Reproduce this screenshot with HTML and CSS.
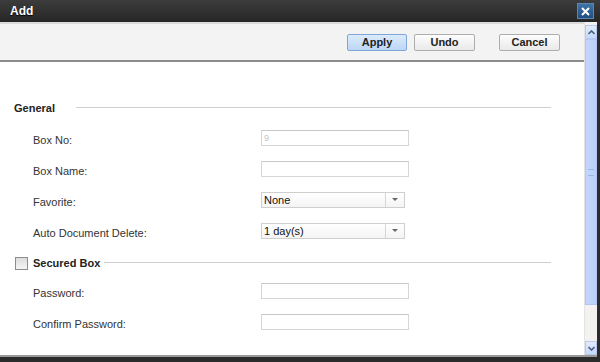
FILE: index.html
```html
<!DOCTYPE html>
<html lang="en">
<head>
    <meta charset="UTF-8">
    <title>Add</title>
    <link rel="stylesheet" href="styles.css">
</head>
<body>
    <div class="window">
        <div class="titlebar">
            <span class="title">Add</span>
            <button class="close-btn">
                <svg width="9" height="9" viewBox="0 0 9 9"><path d="M1 1L8 8M8 1L1 8" stroke="#fff" stroke-width="2"/></svg>
            </button>
        </div>

        <div class="frame">
            <div class="content">
                <!-- Toolbar -->
                <div class="toolbar">
                    <button class="btn btn-primary">Apply</button>
                    <button class="btn">Undo</button>
                    <button class="btn btn-cancel">Cancel</button>
                </div>

                <div class="form">
                    <div class="section-head">
                        <span class="section-title">General</span>
                        <span class="section-line"></span>
                    </div>
                    <div class="rows">
                        <div class="row">
                            <label>Box No:</label>
                            <input class="field" type="text" placeholder="9">
                        </div>
                        <div class="row">
                            <label>Box Name:</label>
                            <input class="field" type="text">
                        </div>
                        <div class="row">
                            <label>Favorite:</label>
                            <div class="select"><span>None</span><span class="arrow"></span></div>
                        </div>
                        <div class="row">
                            <label>Auto Document Delete:</label>
                            <div class="select"><span>1 day(s)</span><span class="arrow"></span></div>
                        </div>
                    </div>

                    <div class="section-head secured">
                        <span class="checkbox"></span>
                        <span class="section-title">Secured Box</span>
                        <span class="section-line"></span>
                    </div>
                    <div class="rows rows-secured">
                        <div class="row">
                            <label>Password:</label>
                            <input class="field" type="password">
                        </div>
                        <div class="row">
                            <label>Confirm Password:</label>
                            <input class="field" type="password">
                        </div>
                    </div>
                </div>
            </div>

            <!-- Scrollbar -->
            <div class="scrollbar">
                <div class="scroll-btn">
                    <svg width="7" height="5" viewBox="0 0 7 5"><path d="M0.5 4L3.5 1L6.5 4" fill="none" stroke="#4d6185" stroke-width="1.6"/></svg>
                </div>
                <div class="scroll-thumb"><span class="grip"></span></div>
                <div class="scroll-track"></div>
                <div class="scroll-btn">
                    <svg width="7" height="5" viewBox="0 0 7 5"><path d="M0.5 1L3.5 4L6.5 1" fill="none" stroke="#4d6185" stroke-width="1.6"/></svg>
                </div>
            </div>
        </div>
    </div>
</body>
</html>
```

FILE: styles.css
```css
/* Dialog window */
body {
    margin: 0;
    padding: 0;
    font-family: "Liberation Sans", Arial, sans-serif;
    font-size: 11px;
    color: #333;
    background-color: #2b2b2b;
}

.window {
    width: 600px;
    height: 362px;
    display: flex;
    flex-direction: column;
    background-color: #2b2b2b;
    box-sizing: border-box;
    padding: 0 3px 5px 0;
}

.titlebar {
    height: 22px;
    flex: 0 0 22px;
    display: flex;
    align-items: center;
    justify-content: space-between;
    background: linear-gradient(#3c3c3c, #262626);
    margin-right: -3px;
    padding: 0 6px 0 10px;
}

.title {
    color: #fff;
    font-weight: bold;
    font-size: 12px;
    text-shadow: 0 1px 1px #000;
}

.close-btn {
    width: 17px;
    height: 16px;
    padding: 0;
    display: flex;
    align-items: center;
    justify-content: center;
    border: 1px solid #5d86b0;
    background: linear-gradient(#3f74a8, #1f4f80);
}

.frame {
    flex: 1;
    display: flex;
    background-color: #fff;
    border-bottom: 2px solid #999;
}

.content {
    flex: 1;
    display: flex;
    flex-direction: column;
}

/* Toolbar */
.toolbar {
    height: 36px;
    display: flex;
    align-items: center;
    justify-content: flex-end;
    background-color: #f3f3f3;
    border-top: 2px solid #dadada;
    border-bottom: 2px solid #8c8c8c;
    padding-right: 24px;
}

.btn {
    width: 61px;
    height: 17px;
    margin-left: 7px;
    padding: 0;
    font-family: "Liberation Sans", Arial, sans-serif;
    font-size: 11px;
    font-weight: bold;
    color: #222;
    background: linear-gradient(#fdfdfd, #e9e9e9);
    border: 1px solid #adadad;
    border-radius: 2px;
}

.btn-primary {
    width: 60px;
    background: linear-gradient(#dcebfc, #bcd6f5);
    border-color: #7ea6d6;
}

.btn-cancel {
    margin-left: 24px;
}

/* Form */
.form {
    padding: 39px 33px 0 14px;
}

.section-head {
    height: 14px;
    display: flex;
    align-items: center;
}

.section-title {
    font-weight: bold;
    color: #222;
}

.section-line {
    flex: 1;
    height: 1px;
    margin-left: 21px;
    margin-top: -2px;
    background-color: #cfcfcf;
}

.secured {
    margin-top: 17px;
    padding-left: 1px;
}

.secured .section-line {
    margin-left: 4px;
}

.checkbox {
    width: 11px;
    height: 11px;
    margin-right: 5px;
    border: 1px solid #8d8d8d;
    background: linear-gradient(#dcdcdc, #f6f6f6);
}

.rows {
    margin-top: 15px;
    display: flex;
    flex-direction: column;
    gap: 15px;
    padding-left: 19px;
}

.rows-secured {
    margin-top: 13px;
}

.row {
    height: 16px;
    display: flex;
    align-items: center;
}

.row label {
    width: 228px;
    padding-top: 4px;
    color: #333;
}

.field {
    width: 148px;
    height: 16px;
    box-sizing: border-box;
    margin: 0;
    padding: 0 2px;
    border: 1px solid #d6d6d6;
    border-top-color: #c8c8c8;
    font-family: "Liberation Sans", Arial, sans-serif;
    font-size: 9px;
}

.field::placeholder {
    color: #c4c4c4;
}

.select {
    width: 144px;
    height: 16px;
    box-sizing: border-box;
    display: flex;
    align-items: center;
    justify-content: space-between;
    border: 1px solid #cfcfcf;
    background: linear-gradient(#fff, #f4f4f4);
    padding-left: 2px;
    color: #111;
}

.arrow {
    width: 18px;
    height: 14px;
    border-left: 1px solid #d6d6d6;
    position: relative;
}

.arrow::after {
    content: "";
    position: absolute;
    left: 6px;
    top: 5px;
    border-left: 3px solid transparent;
    border-right: 3px solid transparent;
    border-top: 3px solid #666;
}

/* Scrollbar */
.scrollbar {
    width: 12px;
    display: flex;
    flex-direction: column;
    background-color: #f4f2ee;
    border-left: 1px solid #e4e4e4;
    padding-top: 3px;
}

.scroll-btn {
    height: 12px;
    display: flex;
    align-items: center;
    justify-content: center;
    background: linear-gradient(#e3ecfd, #c5d7fa);
    border: 1px solid #b7cbf2;
}

.scroll-thumb {
    height: 264px;
    background: linear-gradient(90deg, #c3d5fb, #bcd0fa);
    border: 1px solid #b1c7f3;
    display: flex;
    align-items: center;
    justify-content: center;
}

.grip {
    width: 6px;
    height: 5px;
    border-top: 1px solid #9db6e8;
    border-bottom: 1px solid #9db6e8;
}

.scroll-track {
    flex: 1;
}
```
